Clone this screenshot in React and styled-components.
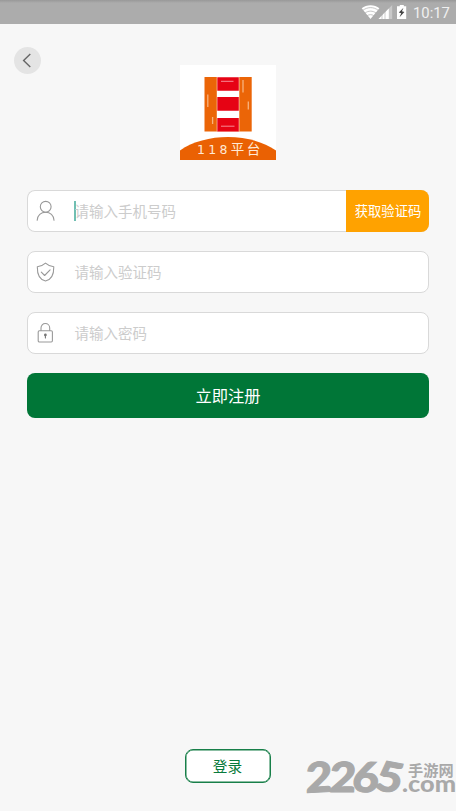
import React from "react";
import styled, { createGlobalStyle } from "styled-components";

const Global = createGlobalStyle`
  * { box-sizing: border-box; }
  body { margin: 0; background: #f7f7f7; font-family: Roboto, "Noto Sans CJK SC", sans-serif; }
  button, input { font: inherit; }
`;

const Screen = styled.div`
  position: relative;
  display: flex;
  flex-direction: column;
  height: 811px;
  overflow: hidden;
  background: #f7f7f7;
`;

const StatusBar = styled.header`
  display: flex;
  justify-content: flex-end;
  align-items: center;
  height: 24px;
  flex: none;
  padding-right: 5px;
  background: linear-gradient(#989898 0, #acacac 3px);
  color: #fff;
`;

const StatusIcons = styled.svg`
  width: 48px;
  height: 16px;
  display: block;
`;

const Clock = styled.span`
  width: 38px;
  margin-left: 4px;
  font-size: 14.8px;
  line-height: 22px;
  padding-top: 2px;
  color: #f0f0f0;
  white-space: nowrap;
`;

const NavRow = styled.nav`
  height: 41px;
  flex: none;
  padding: 23px 0 0 14px;
`;

const BackButton = styled.button`
  display: flex;
  align-items: center;
  justify-content: center;
  width: 27px;
  height: 27px;
  padding: 0;
  border: 0;
  border-radius: 50%;
  background: #e4e4e4;
`;

const Logo = styled.div`
  display: grid;
  width: 96px;
  height: 95px;
  margin: 0 auto;
  flex: none;
  background: #fff;
  svg, span { grid-area: 1 / 1; }
`;

const LogoText = styled.span`
  align-self: end;
  padding: 0 0 2px 17px;
  font: 13.5px/16px "Noto Sans CJK SC", sans-serif;
  letter-spacing: 2.6px;
  color: #ffe9d6;
  white-space: nowrap;
  b { font: 12.5px/16px "DejaVu Sans", sans-serif; letter-spacing: 3.3px; }
`;

const Form = styled.form`
  display: flex;
  flex-direction: column;
  gap: 19px;
  padding: 30px 27px 0 27px;
`;

const Field = styled.label`
  display: flex;
  align-items: center;
  height: 42px;
  overflow: hidden;
  border: 1px solid #d9d9d9;
  border-width: ${(p) => (p.$action ? "0" : "1px")};
  box-shadow: ${(p) => (p.$action ? "inset 0 0 0 1px #d9d9d9" : "none")};
  padding-left: ${(p) => (p.$action ? 1 : 0)}px;
  border-radius: 8px;
  background: #fff;
  > svg { flex: none; margin-left: 8px; }
`;

const Caret = styled.i`
  width: 2px;
  height: 20px;
  margin: 0 -2px 0 19px;
  flex: none;
  background: #70bfb2;
`;

const Input = styled.input`
  flex: 1;
  min-width: 0;
  height: 38px;
  padding: 2px 0 0 ${(p) => (p.$caret ? 0.4 : 19.4)}px;
  border: 0;
  outline: 0;
  background: transparent;
  font-size: 14.5px;
  color: #333;
  &::placeholder { color: #ccc; opacity: 1; }
`;

const CodeButton = styled.button`
  align-self: stretch;
  flex: none;
  width: 83px;
  padding: 0 0 1px 1px;
  border: 0;
  background: #ffa200;
  color: #fff;
  font-size: 13.3px;
`;

const Submit = styled.button`
  height: 45px;
  border: 0;
  border-radius: 8px;
  background: #007637;
  color: #fff;
  padding: 0 0 1px 0;
  font-size: 16.3px;
`;

const LoginButton = styled.button`
  width: 86px;
  height: 34px;
  margin: auto auto 28.5px 184.5px;
  padding: 0;
  flex: none;
  border: 1.5px solid #187f49;
  box-shadow: inset 0 0 0 0.5px #187f49;
  border-radius: 8px;
  background: #fff;
  color: #087a3c;
  font-size: 14.7px;
`;

const Watermark = styled.div`
  position: absolute;
  right: 0;
  bottom: 13px;
  display: flex;
  align-items: flex-start;
  width: 149px;
  height: 42px;
  color: #a9a9a9;
`;

const Digits = styled.div`
  display: flex;
  width: 95px;
  height: 42px;
  font: 900 41.5px/42px Lato, sans-serif;
  -webkit-text-stroke: 1px #a9a9a9;
`;

const Digit = styled.span`
  width: 23.7px;
  flex: none;
  transform: translateY(-1px) rotate(${(p) => p.$tilt}deg) skewX(-3deg) scaleX(1.1);
`;

const Domain = styled.div`
  display: flex;
  flex-direction: column;
  width: 54px;
  padding-top: 5px;
`;

const DomainName = styled.span`
  padding-left: 6px;
  font: 700 15.2px/16px "Noto Sans CJK SC", sans-serif;
  height: 15px;
  white-space: nowrap;
`;

const DomainSuffix = styled.span`
  width: 45px;
  height: 15px;
  font: 900 22px/15px Lato, sans-serif;
  transform: scaleX(1.15);
  transform-origin: left;
  white-space: nowrap;
`;

const stroke = { fill: "none", stroke: "#999", strokeWidth: 1.1, strokeLinecap: "round", strokeLinejoin: "round" };

const UserIcon = () => (
  <svg width="19" height="22" viewBox="0 0 19 22" {...stroke}>
    <circle cx="9.7" cy="6.8" r="5.4" />
    <path d="M1.2 20.2C1.4 15.3 5 12.2 9.6 12.2s8.2 3.1 8.4 8" />
  </svg>
);

const ShieldIcon = () => (
  <svg width="19" height="22" viewBox="0 0 19 22" {...stroke}>
    <path d="M9.5 2.2C7.2 4.3 4.4 5.5 1.3 5.8c-.1 6.4 1.4 12.8 8.2 14.2 6.8-1.4 8.4-7.8 8.3-14.2-3.2-.3-6-1.5-8.3-3.6Z" />
    <path d="m5.3 11.2 3.3 3.3 5.5-5.6" />
  </svg>
);

const LockIcon = () => (
  <svg width="19" height="22" viewBox="0 0 19 22" {...stroke}>
    <rect x="2.2" y="8.7" width="14.2" height="11.3" rx="1.2" />
    <path d="M5 8.5V6.1C5 3.4 6.8 1.5 9.3 1.5s4.4 1.9 4.4 4.6v2.4" />
    <circle cx="9.4" cy="12.9" r=".8" fill="#777" stroke="#777" />
    <path d="M9.4 13v2.9" stroke="#777" />
  </svg>
);

export default function App() {
  return (
    <>
      <Global />
      <Screen>
        <StatusBar>
          <StatusIcons viewBox="0 0 48 16">
            <path d="M.7 4.2C5.4.1 13.7.1 18.4 4.2L9.5 15Z" fill="#fff" />
            <path d="M1.8 6.4c4.6-3.7 11-3.7 15.5 0M4 9.1c3.3-2.6 7.8-2.6 11.1 0M6.2 11.7c2-1.4 4.6-1.4 6.6 0" fill="none" stroke="#acacac" strokeWidth=".7" />
            <path d="M31.2 1v14H17.5Z" fill="#c9c9c9" />
            <path d="M27.8 4.5V15H17.5Z" fill="#fff" />
            <path d="M21 10v5M24 7v8" stroke="#acacac" strokeWidth=".6" />
            <path d="M36 2.3h2.8V1h4v1.3h2.4V15H36Z" fill="#fff" />
            <path d="m42.5 3.8-4.7 4.8 2.4.6-1.7 4 4.9-5.3-2.5-.6Z" fill="#444" />
          </StatusIcons>
          <Clock>10:17</Clock>
        </StatusBar>
        <NavRow>
          <BackButton type="button" aria-label="返回">
            <svg width="27" height="27" viewBox="0 0 27 27" fill="none" stroke="#666" strokeWidth="1.4">
              <path d="m16.3 7-6.7 6.5 6.7 6.5" />
            </svg>
          </BackButton>
        </NavRow>
        <Logo>
          <svg width="96" height="95" viewBox="0 0 96 95">
            <path d="M24.5 12h47.2v54.5H24.5Z" fill="#eb6507" />
            <path d="M36.8 12h22.5v54.5H36.8Z" fill="#fff" />
            <path d="M37.3 12.3h21.5v13.5H37.3Zm0 19.8h21.5v13.7H37.3Zm0 20.9h21.5v13.4H37.3Z" fill="#e60314" />
            <path d="M41 16.3h12.5M41 61.2h13.5" stroke="#f78c96" />
            <path d="M63 15v12.5M27.8 29.5V42M68.3 36.5v8M32.6 52v7" stroke="#f8b27d" strokeWidth="1.3" />
            <path d="M0 85.5C25 67.5 71 67.5 96 85.5V95H0Z" fill="#ea6103" />
          </svg>
          <LogoText><b>118</b>平台</LogoText>
        </Logo>
        <Form onSubmit={(e) => e.preventDefault()}>
          <Field $action>
            <UserIcon />
            <Caret />
            <Input $caret placeholder="请输入手机号码" />
            <CodeButton type="button">获取验证码</CodeButton>
          </Field>
          <Field>
            <ShieldIcon />
            <Input placeholder="请输入验证码" />
          </Field>
          <Field>
            <LockIcon />
            <Input type="password" placeholder="请输入密码" />
          </Field>
          <Submit>立即注册</Submit>
        </Form>
        <LoginButton type="button">登录</LoginButton>
        <Watermark>
          <Digits>
            <Digit $tilt={-3}>2</Digit>
            <Digit $tilt={0}>2</Digit>
            <Digit $tilt={2}>6</Digit>
            <Digit $tilt={11}>5</Digit>
          </Digits>
          <Domain>
            <DomainName>手游网</DomainName>
            <DomainSuffix>.com</DomainSuffix>
          </Domain>
        </Watermark>
      </Screen>
    </>
  );
}
